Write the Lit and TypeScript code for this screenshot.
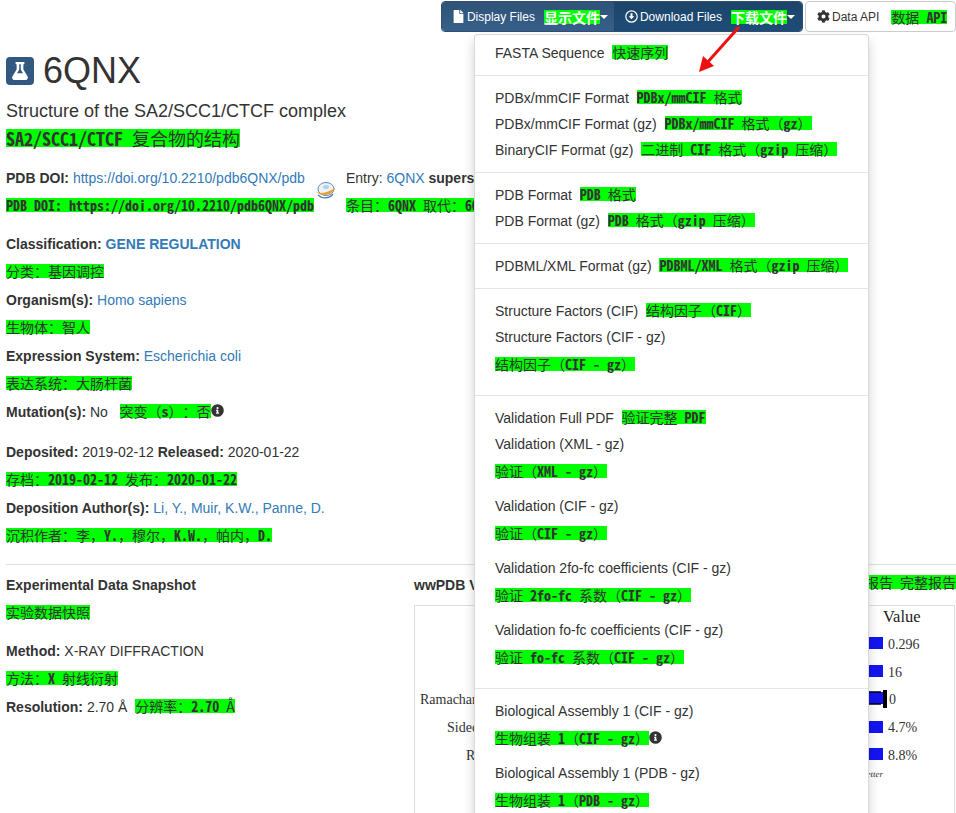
import { LitElement, html, css, svg } from "lit";
import { customElement } from "lit/decorators.js";

// Latin runs read heavier than the CJK glyphs in the reference, so they are marked separately.
const runs = (t: string) => t.split(/([\x21-\x7f][\x20-\x7f]*)/).map((p) => /^[\x21-\x7f]/.test(p) ? html`<span class="lat">${p}</span>` : p);
const g = (t: string) => html`<span class="g">${runs(t)}</span>`;
const info = html`<svg class="info" viewBox="0 0 512 512"><path fill="#333" d="M256 8a248 248 0 1 0 0 496 248 248 0 0 0 0-496zm0 110a42 42 0 1 1 0 84 42 42 0 0 1 0-84zm56 254c0 7-5 12-12 12h-88c-7 0-12-5-12-12v-24c0-7 5-12 12-12h12v-64h-12c-7 0-12-5-12-12v-24c0-7 5-12 12-12h64c7 0 12 5 12 12v100h12c7 0 12 5 12 12z"/></svg>`;

type Item = [string, string, boolean?, boolean?];
const groups: Item[][] = [
  [["FASTA Sequence", "快速序列"]],
  [["PDBx/mmCIF Format", "PDBx/mmCIF 格式"], ["PDBx/mmCIF Format (gz)", "PDBx/mmCIF 格式（gz）"], ["BinaryCIF Format (gz)", "二进制 CIF 格式（gzip 压缩）"]],
  [["PDB Format", "PDB 格式"], ["PDB Format (gz)", "PDB 格式（gzip 压缩）"]],
  [["PDBML/XML Format (gz)", "PDBML/XML 格式（gzip 压缩）"]],
  [["Structure Factors (CIF)", "结构因子（CIF）"], ["Structure Factors (CIF - gz)", "结构因子（CIF - gz）", true]],
  [["Validation Full PDF", "验证完整 PDF"], ["Validation (XML - gz)", "验证（XML - gz）", true], ["Validation (CIF - gz)", "验证（CIF - gz）", true], ["Validation 2fo-fc coefficients (CIF - gz)", "验证 2fo-fc 系数（CIF - gz）", true], ["Validation fo-fc coefficients (CIF - gz)", "验证 fo-fc 系数（CIF - gz）", true]],
  [["Biological Assembly 1 (CIF - gz)", "生物组装 1（CIF - gz）", true, true], ["Biological Assembly 1 (PDB - gz)", "生物组装 1（PDB - gz）", true]],
];

@customElement("app-root")
export class AppRoot extends LitElement {
  static styles = css`
    :host { display: block; width: 956px; height: 813px; overflow: hidden; position: relative; font: 14px/20px "Liberation Sans", Arial, sans-serif; color: #333; background: #fff; }
    a { color: #337ab7; text-decoration: none; }
    b { font-weight: 700; }
    .g { display: inline-block; height: 14px; line-height: 14px; font-size: 14px; background: #0f0; color: #333; font-family: "Noto Sans Mono CJK SC", "Noto Sans CJK SC", monospace; white-space: pre; vertical-align: 0; font-weight: 400; text-spacing-trim: space-all; font-feature-settings: "chws" 0, "palt" 0; }
    .lat { font-weight: 700; }
    .g.big { font-size: 18px; height: 18px; line-height: 18px; vertical-align: top; }
    .topbar { display: flex; justify-content: flex-end; gap: 2px; padding-top: 1px; height: 31px; }
    .btns { display: flex; border-radius: 4px; overflow: hidden; border: 1px solid #2e4f73; color: #fff; font-size: 12px; height: 31px; box-sizing: border-box; }
    .btn { display: flex; align-items: center; padding: 0 6px 0 10px; white-space: pre; background: linear-gradient(#2f5377, #375f8a); }
    .btn.on { background: linear-gradient(#1b4469, #1f4d78); border-left: 1px solid #234567; padding: 0 7px 0 10px; }
    .btn .g { color: #fff; margin-left: 9px; font-weight: 700; }
    .caret { width: 0; height: 0; border-top: 4px solid #fff; border-left: 4px solid transparent; border-right: 4px solid transparent; }
    .api { display: flex; align-items: center; width: 151px; box-sizing: border-box; height: 31px; padding-left: 11px; border: 1px solid #ccc; border-radius: 4px; font-size: 12px; white-space: pre; }
    .api .g { margin-left: 12px; }
    .ic { width: 13px; height: 13px; margin-right: 2px; flex: none; }
    .page { padding: 0 0 0 6px; }
    .head { display: flex; align-items: center; gap: 9px; margin-top: 21px; height: 36px; font-size: 36px; line-height: 36px; }
    .flask { width: 28px; height: 28px; border-radius: 4px; background: #325880; display: flex; align-items: center; justify-content: center; }
    .sub { font-size: 18px; line-height: 20px; margin-top: 12px; }
    .subg { margin-top: 8px; height: 18px; line-height: 18px; }
    .row { height: 20px; margin-bottom: 8px; white-space: pre; }
    .sec { margin-top: 21px; }
    .doi { position: relative; display: flex; }
    .doi .col { width: 340px; }
    .gap10 { height: 10px; }
    .gap12 { height: 12px; }
    hr { border: 0; border-top: 1px solid #ddd; margin: 18px 0 10px; }
    .cols { display: flex; }
    .left { width: 408px; }
    .right { flex: 1; min-width: 0; position: relative; }
    .rhead { display: flex; justify-content: space-between; white-space: pre; height: 20px; }
    .chart { display: block; width: 541px; height: 240px; margin-top: 10px; border: 1px solid #ddd; box-sizing: border-box; }
    .menu { position: absolute; left: 474px; top: 34px; width: 395px; box-sizing: border-box; height: 800px; padding: 5px 0; background: #fff; border: 1px solid rgba(0,0,0,.15); border-radius: 4px; box-shadow: 0 6px 12px rgba(0,0,0,.175); }
    .div { height: 1px; background: #e5e5e5; margin: 9px 0; }
    .item { padding: 3px 20px; white-space: pre; }
    .wrapg { display: block; height: 20px; margin: 8px 0; }
    .info { width: 13px; height: 13px; vertical-align: 0; }
    .globe { width: 21px; height: 17px; position: absolute; left: 309px; top: 14px; }
    .arrow { position: absolute; left: 690px; top: 20px; width: 60px; height: 60px; }
  `;

  render() {
    return html`
      <div class="topbar">
        <div class="btns">
          <div class="btn"><svg class="ic" viewBox="0 0 384 512"><path fill="#fff" d="M224 136V0H24C11 0 0 11 0 24v464c0 13 11 24 24 24h336c13 0 24-11 24-24V160H248c-13 0-24-11-24-24zM384 122v6H256V0h6c6 0 12 3 17 7l98 98c4 5 7 11 7 17z"/></svg>Display Files${g("显示文件")}<span class="caret"></span></div>
          <div class="btn on"><svg class="ic" viewBox="0 0 512 512"><path fill="#fff" d="M256 8a248 248 0 1 0 0 496 248 248 0 0 0 0-496zm0 48a200 200 0 1 1 0 400 200 200 0 0 1 0-400zm-40 72v120h-72l112 112 112-112h-72V128z"/></svg>Download Files${g("下载文件")}<span class="caret"></span></div>
        </div>
        <div class="api"><svg class="ic" viewBox="0 0 512 512"><path fill="#333" d="M487 316l-42-25a190 190 0 0 0 0-70l42-25c5-3 7-9 5-14a248 248 0 0 0-54-94c-4-4-10-5-15-2l-42 25a190 190 0 0 0-61-35V27c0-6-4-11-10-12a250 250 0 0 0-108 0c-6 1-10 6-10 12v49c-22 8-43 20-61 35L89 86c-5-3-11-2-15 2a247 247 0 0 0-54 94c-2 5 0 11 5 14l42 25a190 190 0 0 0 0 70l-42 25c-5 3-7 9-5 14 11 35 30 67 54 94 4 4 10 5 15 2l42-25c18 15 39 27 61 35v49c0 6 4 11 10 12 37 8 74 8 108 0 6-1 10-6 10-12v-49c22-8 43-20 61-35l42 25c5 3 11 2 15-2 24-27 43-59 54-94 2-5 0-11-5-14zM256 336a80 80 0 1 1 0-160 80 80 0 0 1 0 160z"/></svg>Data API${g("数据 API")}</div>
      </div>

      <div class="page">
        <div class="head"><div class="flask"><svg width="18" height="18" viewBox="0 0 448 512"><path fill="#fff" d="M437 403L320 215V64h8c13 0 24-11 24-24V24c0-13-11-24-24-24H120c-13 0-24 11-24 24v16c0 13 11 24 24 24h8v151L11 403c-29 47 5 109 61 109h304c56 0 90-62 61-109zM138 320l58-94c4-5 6-11 6-18V64h44v144c0 7 2 13 6 18l58 94H138z"/></svg></div>6QNX</div>
        <div class="sub">Structure of the SA2/SCC1/CTCF complex</div>
        <div class="subg"><span class="g big">${runs("SA2/SCC1/CTCF 复合物的结构")}</span></div>

        <div class="doi sec">
          <div class="col">
            <div class="row"><b>PDB DOI:</b> <a>https://doi.org/10.2210/pdb6QNX/pdb</a></div>
            <div class="row">${g("PDB DOI: https://doi.org/10.2210/pdb6QNX/pdb")}</div>
            <svg class="globe" viewBox="0 0 21 17"><ellipse cx="11" cy="7" rx="8" ry="6.5" fill="#eaf2fa" stroke="#5f8fc4"/><ellipse cx="11" cy="5" rx="3" ry="2" fill="#b7cfe8"/><path d="M0 9c3 3 11 3 20-3-2 7-14 10-20 3z" fill="#ef9a2d"/><path d="M3 13c4 4 11 4 15-1" fill="none" stroke="#4f7fb5" stroke-width="1.3"/></svg>
          </div>
          <div class="col">
            <div class="row">Entry: <a>6QNX</a> <b>supersedes</b></div>
            <div class="row">${g("条目：6QNX 取代：6Q")}</div>
          </div>
        </div>
        <div class="gap10"></div>
        <div class="row"><b>Classification:</b> <a><b>GENE REGULATION</b></a></div>
        <div class="row">${g("分类：基因调控")}</div>
        <div class="row"><b>Organism(s):</b> <a>Homo sapiens</a></div>
        <div class="row">${g("生物体：智人")}</div>
        <div class="row"><b>Expression System:</b> <a>Escherichia coli</a></div>
        <div class="row">${g("表达系统：大肠杆菌")}</div>
        <div class="row"><b>Mutation(s):</b> No   ${g("突变（s）：否")}${info}</div>
        <div class="gap12"></div>
        <div class="row"><b>Deposited:</b> 2019-02-12 <b>Released:</b> 2020-01-22</div>
        <div class="row">${g("存档：2019-02-12 发布：2020-01-22")}</div>
        <div class="row"><b>Deposition Author(s):</b> <a>Li, Y., Muir, K.W., Panne, D.</a></div>
        <div class="row">${g("沉积作者：李，Y.，穆尔，K.W.，帕内，D.")}</div>
        <hr />
        <div class="cols">
          <div class="left">
            <div class="row"><b>Experimental Data Snapshot</b></div>
            <div class="row">${g("实验数据快照")}</div>
            <div class="gap10"></div>
            <div class="row"><b>Method:</b> X-RAY DIFFRACTION</div>
            <div class="row">${g("方法：X 射线衍射")}</div>
            <div class="row"><b>Resolution:</b> 2.70 Å  ${g("分辨率：2.70 Å")}</div>
          </div>
          <div class="right">
            <div class="rhead"><b>wwPDB Validation</b>${g("报告 完整报告")}</div>
            <svg class="chart" viewBox="0 0 539 238">
              <g font-family="Liberation Serif, serif" font-size="14" fill="#333">
                <text x="468" y="16" font-size="16.5" fill="#222">Value</text>
                ${([["0.296", 43, 31], ["16", 71, 59], ["0", 98, 86], ["4.7%", 126, 115], ["8.8%", 154, 142]] as [string, number, number][]).map(([t, y, by], i) => svg`
                  <rect x="440" y=${by} width="28" height="12" fill="#1414f0"/>
                  <text x=${i === 2 ? 474 : 473} y=${y}>${t}</text>`)}
                <path d="M440 86h26M440 98h26" stroke="#000" stroke-width="1.5"/>
                <rect x="468" y="84" width="4" height="18" fill="#000"/>
                <text x="5" y="98">Ramachandran</text>
                <text x="32" y="126">Sidechain</text>
                <text x="51" y="154">R</text>
                <text x="468" y="171" font-size="9" font-style="italic" text-anchor="end">Better</text>
              </g>
            </svg>
          </div>
        </div>
      </div>

      <div class="menu">
        ${groups.map((grp, i) => html`
          ${i ? html`<div class="div"></div>` : ""}
          ${grp.map(([t, c, wrap, inf]) => wrap
            ? html`<div class="item">${t}<span class="wrapg">${g(c)}${inf ? info : ""}</span></div>`
            : html`<div class="item">${t}  ${g(c)}</div>`)}
        `)}
      </div>

      <svg class="arrow" viewBox="0 0 60 60"><path d="M49 7L16 44" stroke="#f01010" stroke-width="3"/><path d="M9 52l4-16 11 10z" fill="#f01010"/></svg>
    `;
  }
}
